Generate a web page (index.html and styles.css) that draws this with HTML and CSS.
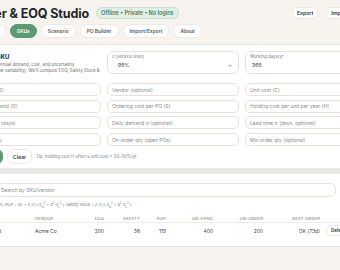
FILE: index.html
```html
<!DOCTYPE html>
<html lang="en">
<head>
<meta charset="utf-8">
<title>Reorder &amp; EOQ Studio</title>
<link rel="stylesheet" href="styles.css">
</head>
<body>
<div class="app">
  <header class="topbar">
    <div class="brand">
      <h1>Reorder &amp; EOQ Studio</h1>
      <span class="badge">Offline • Private • No logins</span>
    </div>
    <div class="actions">
      <button class="btn">Export</button>
      <button class="btn">Import</button>
      <button class="btn">Reset</button>
    </div>
  </header>
  <nav class="tabs">
    <button class="tab"><svg class="tab-ico" viewBox="0 0 10 10" width="5" height="5"><path d="M1 5l4-4 4 4M2.5 4v5h5V4" fill="none" stroke="#5a5a5a" stroke-width="1.2"/></svg>Dashboard</button>
    <button class="tab active">SKUs</button>
    <button class="tab">Scenario</button>
    <button class="tab">PO Builder</button>
    <button class="tab">Import/Export</button>
    <button class="tab">About</button>
  </nav>

  <section class="card form-card">
    <div class="grid top-grid">
      <div class="intro">
        <h2>Add / Edit SKU</h2>
        <p>Add the SKU's annual demand, cost, and uncertainty<br>(demand &amp; review variability). We'll compute EOQ, Safety Stock &amp; ROP.</p>
      </div>
      <div class="float">
        <span class="float-label">z (service level)</span>
        <div class="select-value">95%<svg class="chev" viewBox="0 0 10 6" width="4" height="3"><path d="M1 1l4 4 4-4" fill="none" stroke="#555" stroke-width="1.6"/></svg></div>
      </div>
      <div class="float">
        <span class="float-label">Working days/yr</span>
        <input class="float-input" value="365">
      </div>
    </div>
    <div class="grid fields">
      <input class="inp" placeholder="Item / SKU ID">
      <input class="inp" placeholder="Vendor (optional)">
      <input class="inp" placeholder="Unit cost (C)">
      <input class="inp" placeholder="Annual demand (D)">
      <input class="inp" placeholder="Ordering cost per PO (S)">
      <input class="inp" placeholder="Holding cost per unit per year (H)">
      <input class="inp" placeholder="Lead time L (days)">
      <input class="inp" placeholder="Daily demand σ (optional)">
      <input class="inp" placeholder="Lead time σ (days, optional)">
      <input class="inp" placeholder="On-hand qty">
      <input class="inp" placeholder="On-order qty (open POs)">
      <input class="inp" placeholder="Min order qty (optional)">
    </div>
    <div class="btnrow">
      <button class="btn primary">Save SKU</button>
      <button class="btn ghost">Clear</button>
      <span class="tip">Tip: holding cost H often ≈ unit cost × 20–30%/yr.</span>
    </div>
  </section>

  <div class="band"></div>

  <section class="card list-card">
    <div class="searchrow">
      <h3>SKU list</h3>
      <input class="inp search" placeholder="Search by SKU/vendor">
      <button class="btn small">All vendors</button>
    </div>
    <p class="formula">EOQ = √(2·D·S / H); ROP = dL + z·√( L·σ<sub>d</sub><sup>2</sup> + d<sup>2</sup>·σ<sub>L</sub><sup>2</sup> ). Safety Stock = z·√( L·σ<sub>d</sub><sup>2</sup> + d<sup>2</sup>·σ<sub>L</sub><sup>2</sup> ).</p>
    <div class="table">
      <div class="trow thead">
        <span>SKU</span>
        <span>Vendor</span>
        <span class="num">EOQ</span>
        <span class="num">Safety</span>
        <span class="num">ROP</span>
        <span class="num">On-hand</span>
        <span class="num">On-order</span>
        <span class="num">Next order</span>
        <span></span>
      </div>
      <div class="trow tbody">
        <span>Steel Bracket</span>
        <span>Acme Co</span>
        <span class="num">200</span>
        <span class="num">36</span>
        <span class="num">115</span>
        <span class="num">400</span>
        <span class="num">200</span>
        <span class="num">OK (73d)</span>
        <span><button class="btn del">Delete</button></span>
      </div>
    </div>
  </section>
</div>
</body>
</html>
```
FILE: styles.css
```css
* { box-sizing: border-box; }
html, body { margin: 0; padding: 0; }
body {
  background: #f7f3ef;
  font-family: "Inter", "Liberation Sans", sans-serif;
  color: #2a2a2a;
  overflow: hidden;
  width: 340px;
  height: 270px;
}
.app {
  width: 442px;
  margin-left: -49px;
  padding: 0 8px;
}
.topbar {
  display: flex;
  align-items: center;
  justify-content: space-between;
  padding-top: 6px;
  height: 20px;
}
.brand { display: flex; align-items: center; gap: 7px; }
h1 {
  margin: 0;
  font-size: 12.5px;
  font-weight: 700;
  color: #20262a;
  letter-spacing: -0.1px;
}
.badge {
  display: inline-flex;
  align-items: center;
  height: 12px;
  padding: 0 4px;
  border-radius: 6px;
  background: #e3efe6;
  border: 1px solid #c9dfcf;
  color: #4b7c5a;
  font-size: 5.5px;
  font-weight: 600;
}
.actions { display: flex; gap: 8px; }
.btn {
  font-family: inherit;
  height: 12px;
  padding: 0 4px;
  border: 1px solid #ece8e3;
  border-radius: 5px;
  background: #fff;
  color: #333;
  font-size: 5.2px;
  font-weight: 600;
  cursor: pointer;
}
.tabs {
  display: flex;
  gap: 4px;
  margin-top: 4px;
  height: 14px;
  margin-bottom: 6px;
}
.tab {
  font-family: inherit;
  display: inline-flex;
  align-items: center;
  gap: 2px;
  height: 14px;
  padding: 0 6px;
  border-radius: 7px;
  border: 1px solid #eeeae5;
  background: #fff;
  color: #5a5a5a;
  font-size: 4.9px;
  font-weight: 600;
}
.tab-ico { display: block; }
.tab.active {
  background: #5b9a73;
  border-color: #5b9a73;
  color: #fff;
}
.card {
  background: #fff;
  border-top: 1px solid #e9e4de;
  padding: 6px 8px;
}
.form-card { height: 124px; }
.grid {
  display: grid;
  grid-template-columns: 134px 132px 132px;
  column-gap: 6px;
}
.top-grid { height: 23px; margin-bottom: 9px; }
.intro h2 {
  margin: 2px 0 2px;
  font-size: 6px;
  font-weight: 700;
  color: #222;
  white-space: nowrap;
}
.intro p {
  margin: 0;
  font-size: 4.3px;
  line-height: 6px;
  color: #6a6a6a;
  height: 12px;
  overflow: hidden;
  white-space: nowrap;
}
.float {
  border: 1px solid #e7e2dd;
  border-radius: 6px;
  height: 23px;
  padding: 2px 4px 0;
  display: flex;
  flex-direction: column;
}
.float-label {
  font-size: 4.3px;
  color: #7a7a7a;
  line-height: 6px;
}
.select-value {
  display: flex;
  align-items: center;
  justify-content: space-between;
  padding: 2px 2px 0 6px;
  font-size: 5.2px;
  color: #333;
}
.chev { display: block; }
.float-input {
  border: 0;
  outline: none;
  padding: 2px 2px 0 2px;
  font-family: inherit;
  font-size: 5.2px;
  color: #333;
  background: transparent;
  width: 100%;
}
.fields { row-gap: 3.7px; }
.inp {
  height: 13px;
  border: 1px solid #e7e2dd;
  border-radius: 5px;
  padding: 0 4px;
  font-family: inherit;
  font-size: 5px;
  color: #333;
  background: #fff;
  outline: none;
  width: 100%;
}
.inp::placeholder { color: #8b8b8b; }
.btnrow {
  display: flex;
  align-items: center;
  gap: 4px;
  margin-top: 3px;
}
.btn.primary {
  height: 15px;
  background: #5b9a73;
  border-color: #5b9a73;
  color: #fff;
  width: 36px;
  border-radius: 6px;
}
.btn.ghost {
  height: 15px;
  width: 25px;
  border-radius: 6px;
  color: #444;
}
.tip {
  font-size: 4.3px;
  color: #7d7d7d;
}
.band {
  height: 6px;
  background: #eae8e5;
}
.list-card {
  padding-top: 9px;
  height: 73px;
  border-top: 0;
  border-bottom: 1px solid #e5e0da;
}
.searchrow {
  display: flex;
  gap: 4px;
  align-items: center;
}
.searchrow h3 {
  margin: 0;
  width: 25px;
  flex: none;
  font-size: 6px;
  font-weight: 700;
  white-space: nowrap;
  overflow: hidden;
}
.search {
  width: 340px;
  height: 14px;
  border-radius: 6px;
  flex: none;
  padding-left: 4px;
}
.btn.small { height: 14px; flex: none; }
.formula {
  margin: 5px 0 6px;
  font-size: 4px;
  color: #7a7a7a;
  line-height: 6px;
  white-space: nowrap;
}
.formula sub, .formula sup { font-size: 2.8px; line-height: 0; }
.trow {
  display: grid;
  grid-template-columns: 65px 43px 32px 36px 26px 47px 50px 57px 54px;
  align-items: center;
}
.trow > span { padding: 0 3px; white-space: nowrap; }
.trow .num { text-align: right; }
.thead {
  height: 9px;
  font-size: 4px;
  text-transform: uppercase;
  letter-spacing: 0.25px;
  color: #6f6f6f;
  border-bottom: 1px solid #efebe7;
}
.tbody {
  height: 15px;
  font-size: 5px;
  color: #444;
}
.btn.del {
  height: 11px;
  padding: 0 4px;
  font-size: 4.6px;
}
```
